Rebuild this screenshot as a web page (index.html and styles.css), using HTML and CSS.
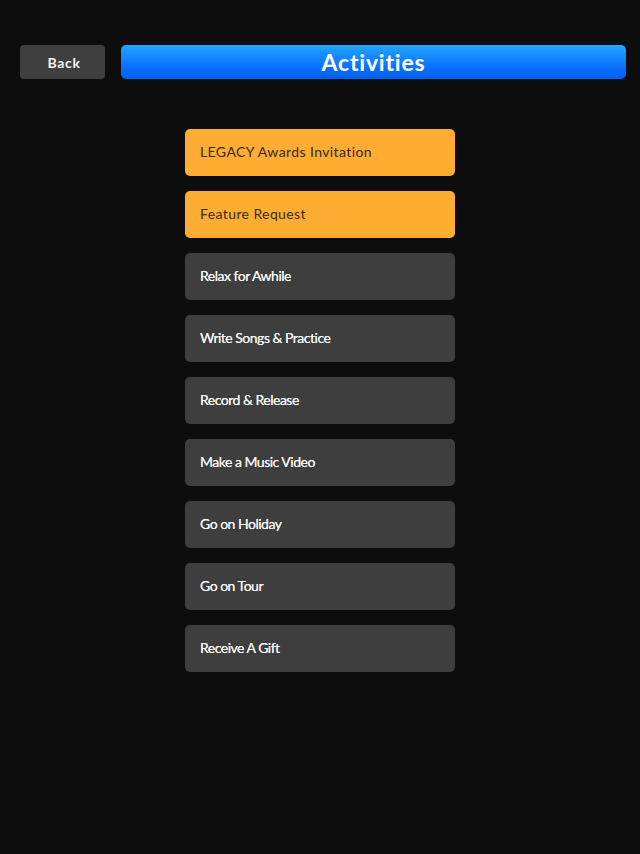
FILE: index.html
```html
<!DOCTYPE html>
<html lang="en">
<head>
    <meta charset="UTF-8">
    <meta name="viewport" content="width=device-width, initial-scale=1.0">
    <title>Activities</title>
    <link rel="stylesheet" href="styles.css">
</head>
<body>

    <!-- Barra superior -->
    <div class="barra">
        <button class="atras">Back</button>
        <div class="titulo">Activities</div>
    </div>

    <!-- Lista de actividades -->
    <div class="lista">
        <div class="actividad destacada">LEGACY Awards Invitation</div>
        <div class="actividad destacada">Feature Request</div>
        <div class="actividad">Relax for Awhile</div>
        <div class="actividad">Write Songs &amp; Practice</div>
        <div class="actividad">Record &amp; Release</div>
        <div class="actividad">Make a Music Video</div>
        <div class="actividad">Go on Holiday</div>
        <div class="actividad">Go on Tour</div>
        <div class="actividad">Receive A Gift</div>
    </div>

</body>
</html>
```

FILE: styles.css
```css
body {
    font-family: Lato, "Open Sans", sans-serif;
    background-color: #0d0d0d;
    margin: 0;
    padding: 45px 14px 0 20px;
}
.barra {
    display: flex;
    gap: 16px;
    height: 34px;
}
.atras {
    width: 85px;
    height: 34px;
    background-color: #3f3f3f;
    color: #f2f2f2;
    border: none;
    border-radius: 4px;
    font-family: inherit;
    font-size: 14px;
    font-weight: bold;
    letter-spacing: 0.7px;
    padding: 0 0 0 3px;
}
.titulo {
    flex: 1;
    background: linear-gradient(#22a6ff, #0a6cff 70%, #0060f0);
    border-radius: 5px;
    color: white;
    font-size: 23px;
    font-weight: bold;
    letter-spacing: 0.8px;
    text-align: center;
    line-height: 34px;
}
.lista {
    width: 270px;
    margin: 50px auto 0 165px;
    display: flex;
    flex-direction: column;
    gap: 15px;
}
.actividad {
    height: 47px;
    line-height: 46px;
    padding-left: 15px;
    border-radius: 5px;
    background-color: #3e3e3e;
    color: #f4f4f4;
    font-size: 14px;
    letter-spacing: -0.5px;
    text-shadow: 0 0 0.4px #f4f4f4;
}
.destacada {
    background-color: #fdad32;
    color: #3b2a12;
    letter-spacing: 0.4px;
    text-shadow: none;
}
```
